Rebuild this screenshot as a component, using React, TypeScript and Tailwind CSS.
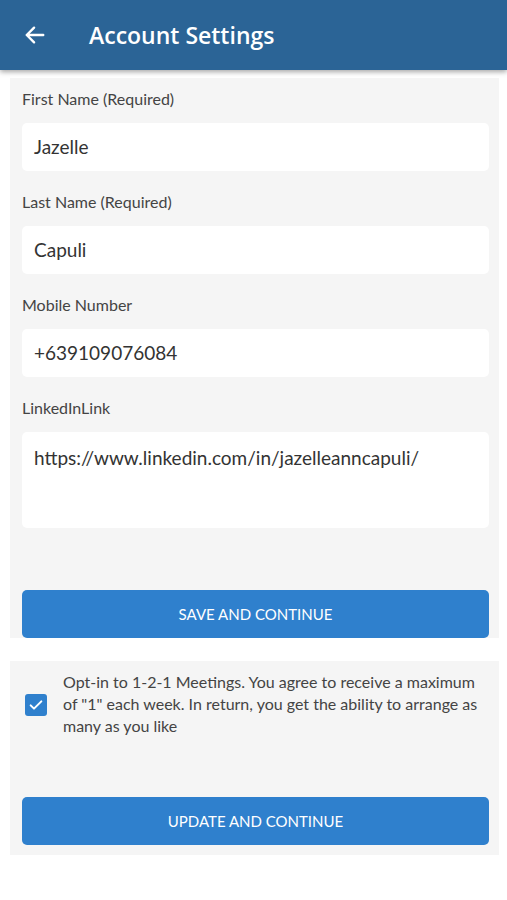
import React, { useState } from 'react'

type FieldProps = {
    label: string;
    value: string;
    tall?: boolean;
    first?: boolean;
}

const Field: React.FC<FieldProps> = ({ label, value, tall, first }) => {
    return (
        <div className="flex flex-col">
            <label className={`text-[16px] leading-[20px] text-[#444] pb-[14px] ${first ? 'pt-[11px]' : 'pt-[21px]'}`}>{label}</label>
            <div className={`bg-white rounded-[5px] px-[12px] text-[19px] text-[#333] ${tall ? 'h-[96px] pt-[12px]' : 'h-[48px] flex items-center'}`}>
                {value}
            </div>
        </div>
    )
}

export default function App() {
    const [optIn, setOptIn] = useState<boolean>(true);

    return (
        <div className="w-[507px] h-[900px] bg-white font-['Lato',sans-serif]">
            <header className="h-[70px] bg-[#2b6496] flex items-center shadow-[0_2px_5px_rgba(0,0,0,0.35)] relative z-10">
                <svg width="22" height="22" viewBox="0 0 24 24" className="ml-[24px]" fill="none" stroke="white" strokeWidth="2.6" strokeLinecap="round" strokeLinejoin="round">
                    <path d="M21 12H3M11 4l-8 8 8 8" />
                </svg>
                <h1 className="ml-[43px] text-white text-[23px] font-semibold font-['Open_Sans',sans-serif]">Account Settings</h1>
            </header>

            <section className="ml-[10px] mr-[8px] mt-[8px] bg-[#f5f5f5] pl-[12px] pr-[10px]">
                <Field label="First Name (Required)" value="Jazelle" first />
                <Field label="Last Name (Required)" value="Capuli" />
                <Field label="Mobile Number" value="+639109076084" />
                <Field label="LinkedInLink" value="https://www.linkedin.com/in/jazelleanncapuli/" tall />
                <button className="mt-[62px] w-full h-[48px] bg-[#2f80cd] rounded-[5px] text-white text-[15px] uppercase">
                    Save and Continue
                </button>
            </section>

            <section className="ml-[10px] mr-[8px] mt-[23px] bg-[#f5f5f5] pl-[12px] pr-[10px] pt-[10px] pb-[10px]">
                <div className="flex items-start">
                    <button
                        onClick={() => setOptIn(!optIn)}
                        className={`mt-[23px] ml-[3px] w-[22px] h-[22px] rounded-[3px] flex items-center justify-center shrink-0 ${optIn ? 'bg-[#2f80cd]' : 'bg-white border-2 border-[#888]'}`}
                    >
                        {optIn && (
                            <svg width="16" height="16" viewBox="0 0 24 24" fill="none" stroke="white" strokeWidth="3" strokeLinecap="round" strokeLinejoin="round">
                                <path d="M4 12.5l5 5L20 6.5" />
                            </svg>
                        )}
                    </button>
                    <p className="ml-[16px] text-[16px] leading-[22px] text-[#444]">
                        Opt-in to 1-2-1 Meetings. You agree to receive a maximum of "1" each week. In return, you get the ability to arrange as many as you like
                    </p>
                </div>
                <button className="mt-[60px] w-full h-[48px] bg-[#2f80cd] rounded-[5px] text-white text-[15px] uppercase">
                    Update and Continue
                </button>
            </section>
        </div>
    )
}
